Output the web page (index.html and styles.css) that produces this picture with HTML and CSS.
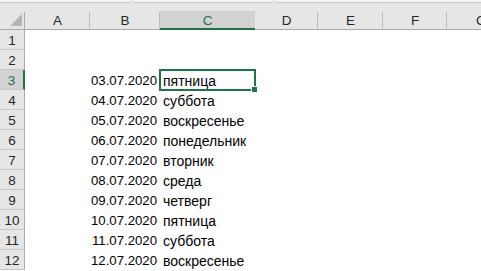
FILE: index.html
```html
<!DOCTYPE html>
<html lang="ru">
<head>
<meta charset="utf-8">
<title>Sheet</title>
<link rel="stylesheet" href="styles.css">
</head>
<body>
<div class="topbar"><span class="seg seg1"></span><span class="seg seg2"></span><span class="seg seg3"></span></div>
<div class="sheet">
  <div class="ch corner"><span class="tri"></span></div>
  <div class="ch">A</div>
  <div class="ch">B</div>
  <div class="ch sel">C</div>
  <div class="ch">D</div>
  <div class="ch">E</div>
  <div class="ch">F</div>
  <div class="ch last">G</div>

  <div class="rh">1</div><div class="c"></div><div class="c"></div><div class="c"></div><div class="c"></div><div class="c"></div><div class="c"></div><div class="c"></div>
  <div class="rh">2</div><div class="c"></div><div class="c"></div><div class="c"></div><div class="c"></div><div class="c"></div><div class="c"></div><div class="c"></div>
  <div class="rh sel">3</div><div class="c"></div><div class="c num">03.07.2020</div><div class="c txt active">пятница</div><div class="c"></div><div class="c"></div><div class="c"></div><div class="c"></div>
  <div class="rh">4</div><div class="c"></div><div class="c num">04.07.2020</div><div class="c txt">суббота</div><div class="c"></div><div class="c"></div><div class="c"></div><div class="c"></div>
  <div class="rh">5</div><div class="c"></div><div class="c num">05.07.2020</div><div class="c txt">воскресенье</div><div class="c"></div><div class="c"></div><div class="c"></div><div class="c"></div>
  <div class="rh">6</div><div class="c"></div><div class="c num">06.07.2020</div><div class="c txt">понедельник</div><div class="c"></div><div class="c"></div><div class="c"></div><div class="c"></div>
  <div class="rh">7</div><div class="c"></div><div class="c num">07.07.2020</div><div class="c txt">вторник</div><div class="c"></div><div class="c"></div><div class="c"></div><div class="c"></div>
  <div class="rh">8</div><div class="c"></div><div class="c num">08.07.2020</div><div class="c txt">среда</div><div class="c"></div><div class="c"></div><div class="c"></div><div class="c"></div>
  <div class="rh">9</div><div class="c"></div><div class="c num">09.07.2020</div><div class="c txt">четверг</div><div class="c"></div><div class="c"></div><div class="c"></div><div class="c"></div>
  <div class="rh">10</div><div class="c"></div><div class="c num">10.07.2020</div><div class="c txt">пятница</div><div class="c"></div><div class="c"></div><div class="c"></div><div class="c"></div>
  <div class="rh">11</div><div class="c"></div><div class="c num">11.07.2020</div><div class="c txt">суббота</div><div class="c"></div><div class="c"></div><div class="c"></div><div class="c"></div>
  <div class="rh">12</div><div class="c"></div><div class="c num">12.07.2020</div><div class="c txt">воскресенье</div><div class="c"></div><div class="c"></div><div class="c"></div><div class="c"></div>
</div>
</body>
</html>
```
FILE: styles.css
```css
html, body {
  margin: 0;
  padding: 0;
  background: #ffffff;
  overflow: hidden;
}
body {
  font-family: "Liberation Sans", Arial, sans-serif;
  font-size: 13px;
  color: #000;
  width: 481px;
  height: 271px;
}
.topbar {
  height: 11px;
  background: #e6e6e6;
  display: flex;
  box-sizing: border-box;
}
.seg {
  height: 2px;
  background: #f3f3f3;
  border-bottom: 1px solid #c8c8c8;
  margin-right: 3px;
}
.seg1 { width: 130px; }
.seg2 { width: 139px; }
.seg3 { flex: 1; margin-right: 0; }
.sheet {
  display: grid;
  grid-template-columns: 25px 65px 70px 95px 63px 65px 64px 1fr;
  grid-auto-rows: 20px;
  grid-template-rows: 19px;
}
.ch {
  background: #e6e6e6;
  color: #262626;
  font-size: 13.5px;
  border-bottom: 1px solid #ababab;
  position: relative;
  display: flex;
  align-items: center;
  justify-content: center;
  padding-top: 1px;
  box-sizing: border-box;
}
.ch::after {
  content: "";
  position: absolute;
  right: 0;
  top: 1px;
  bottom: 0;
  width: 1px;
  background: #bcbcbc;
}
.ch.last::after { display: none; }
.ch.last { justify-content: flex-start; padding-left: 29px; }
.ch.corner::after { background: #ababab; }
.ch.sel {
  background: #d2d2d2;
  color: #217346;
  border-bottom: 2px solid #217346;
}
.ch.sel::after { display: none; }
.tri {
  position: absolute;
  right: 3px;
  bottom: 3px;
  width: 0;
  height: 0;
  border-left: 12px solid transparent;
  border-bottom: 12px solid #b5b5b5;
}
.rh {
  background: #e6e6e6;
  color: #262626;
  font-size: 13.5px;
  border-right: 1px solid #ababab;
  border-bottom: 1px solid #c8c8c8;
  display: flex;
  align-items: center;
  justify-content: center;
  padding-top: 1px;
  box-sizing: border-box;
}
.rh.sel {
  background: #d2d2d2;
  color: #217346;
  border-right: 2px solid #217346;
}
.c {
  display: flex;
  align-items: center;
  padding: 1px 3px 0 3px;
  white-space: nowrap;
  min-width: 0;
  box-sizing: border-box;
}
.num { justify-content: flex-end; font-size: 13.2px; }
.txt { justify-content: flex-start; overflow: visible; font-size: 14px; }
.active { position: relative; }
.active::after {
  content: "";
  position: absolute;
  left: -1px;
  top: -1px;
  right: -1px;
  bottom: -1px;
  border: 2px solid #217346;
}
.active::before {
  content: "";
  position: absolute;
  right: -3px;
  bottom: -3px;
  width: 5px;
  height: 5px;
  background: #217346;
  border: 1px solid #ffffff;
  z-index: 1;
}
```
